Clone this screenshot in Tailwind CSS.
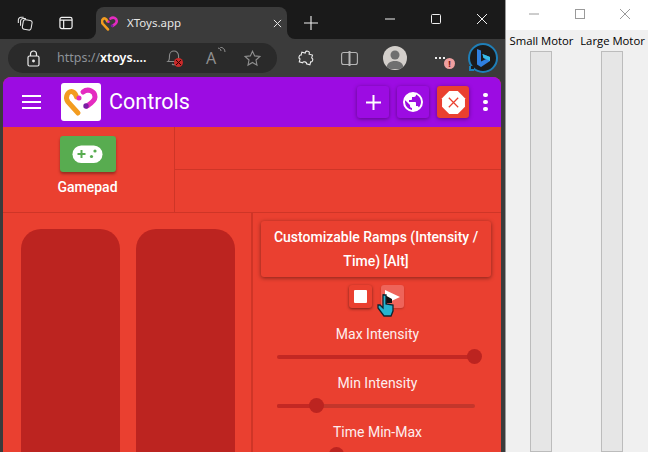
<!DOCTYPE html>
<html lang="en">
<head>
  <meta charset="UTF-8">
  <title>XToys.app</title>
  <script src="https://cdn.jsdelivr.net/npm/@tailwindcss/browser@4"></script>
</head>
<body class="bg-[#3b3b3b] overflow-hidden">
  <div class="relative flex w-[648px] h-[452px] overflow-hidden">

    <!-- browser window -->
    <div class="w-[505px] h-full flex flex-col shrink-0 bg-[#3b3b3b] font-['Noto_Sans',sans-serif]">
      <!-- tab strip -->
      <div class="h-[39px] shrink-0 flex flex-col">
        <div class="h-[7px] bg-[#1a1a1a]"></div>
        <div class="h-[32px] flex">
          <div class="w-[96px] bg-[#1a1a1a] rounded-br-[8px] flex items-center pl-[17px] gap-[26px]">
            <svg class="w-[16px] h-[16px]" viewBox="0 0 18 18" fill="none" stroke="#e8e8e8" stroke-width="1.2"><path d="M1.500 9V5.500a3 3 0 0 1 3-3h3"/><path d="M4 12V7a3 3 0 0 1 3-3h3"/><rect x="6.500" y="5.500" width="10" height="11" rx="2.500" transform="rotate(10 11 11)"/></svg>
            <svg class="w-[14px] h-[14px]" viewBox="0 0 15 15" fill="none" stroke="#f0f0f0" stroke-width="1.300"><rect x="1" y="1.500" width="13" height="12" rx="2"/><path d="M1 4.500h13M5 4.500v9"/></svg>
          </div>
          <div class="w-[191px] bg-[#1a1a1a]">
            <div class="h-full bg-[#3b3b3b] rounded-t-[8px] flex items-center pl-[5px] pr-[5px]">
              <svg class="w-[17px] h-[15px] shrink-0" viewBox="4 4 32 29" fill="none" stroke-linecap="round"><path d="M17 30 7 19C3 13 8 7 12 9c2 1 3 3 3.500 5" stroke="#f39c1f" stroke-width="5"/><path d="M22 9c5-4 12-1 12 5 0 4-5 7-8 9" stroke="#e42bc0" stroke-width="5"/><circle cx="18" cy="15" r="2.500" fill="#e42bc0"/><circle cx="25" cy="23" r="2.700" fill="#7b1fa2"/></svg>
              <span class="ml-[9px] text-[11.500px] text-[#e6e6e6] leading-none">XToys.app</span>
              <svg class="ml-auto w-[9px] h-[9px]" viewBox="0 0 10 10" stroke="#e8e8e8" stroke-width="1.100"><path d="M1 1l8 8M9 1l-8 8"/></svg>
            </div>
          </div>
          <div class="flex-1 bg-[#1a1a1a] rounded-bl-[8px] flex items-center pl-[17px]">
            <svg class="w-[14px] h-[14px]" viewBox="0 0 14 14" stroke="#f0f0f0" stroke-width="1.100"><path d="M7 0v14M0 7h14"/></svg>
            <div class="ml-auto flex items-center pb-[8px] pr-[18px] gap-[36px]">
              <svg class="w-[10px] h-[10px]" viewBox="0 0 10 10" stroke="#f0f0f0" stroke-width="1"><path d="M0 5h10"/></svg>
              <svg class="w-[10px] h-[10px]" viewBox="0 0 10 10" fill="none" stroke="#f0f0f0" stroke-width="1"><rect x=".5" y=".5" width="9" height="9" rx="1"/></svg>
              <svg class="w-[10px] h-[10px]" viewBox="0 0 10 10" stroke="#f0f0f0" stroke-width="1"><path d="M0 0l10 10M10 0 0 10"/></svg>
            </div>
          </div>
        </div>
      </div>

      <!-- toolbar -->
      <div class="h-[38px] shrink-0 flex items-center pl-[8px]">
        <div class="w-[269px] h-[30px] bg-[#2a2a2a] rounded-full flex items-center pl-[19px]">
          <svg class="w-[13px] h-[17px] shrink-0" viewBox="0 0 13 17" fill="none" stroke="#ededed" stroke-width="1.200"><rect x="1" y="6" width="11" height="10" rx="1.500"/><path d="M3.500 6V4a3 3 0 0 1 6 0v2"/><circle cx="6.500" cy="11" r=".8" fill="#ededed"/></svg>
          <span class="ml-[17px] text-[12.500px] leading-none text-[#8d9298] w-[92px] whitespace-nowrap">https://<span class="text-white font-semibold">xtoys....</span></span>
          <div class="relative ml-[17px] w-[16px] h-[18px]">
            <svg class="w-[16px] h-[17px]" viewBox="0 0 16 17" fill="none" stroke="#8c8c8c" stroke-width="1.100"><path d="M2 12.500c1.500-1 1.500-3 1.500-6a4.500 4.500 0 0 1 9 0c0 3 0 5 1.500 6zM6 15c1 1 3 1 4 0"/></svg>
            <div class="absolute left-[8px] top-[9px] w-[9px] h-[9px] rounded-full bg-[#c92a2a] flex items-center justify-center">
              <svg class="w-[5px] h-[5px]" viewBox="0 0 6 6" stroke="#300" stroke-width="1.200"><path d="M0 0l6 6M6 0 0 6"/></svg>
            </div>
          </div>
          <span class="ml-[24px] flex w-[20px] relative text-[16px] leading-none text-[#8f8f8f]">A
            <svg class="absolute left-[10px] -top-[3px] w-[10px] h-[10px]" viewBox="0 0 10 10" fill="none" stroke="#8f8f8f" stroke-width="1"><path d="M2 1c2 .5 3 1.500 3 3M4 0c3 .5 5 2 5 5"/></svg>
          </span>
          <svg class="ml-[18px] w-[17px] h-[17px]" viewBox="0 0 17 17" fill="none" stroke="#8f8f8f" stroke-width="1.100"><path d="M8.500 1.200l2.200 4.700 5.100.6-3.800 3.500 1 5.100-4.500-2.600L4 15.100l1-5.100L1.200 6.500l5.100-.6z"/></svg>
        </div>
        <svg class="ml-[21px] w-[16px] h-[16px]" viewBox="0 0 16 16" fill="none" stroke="#ededed" stroke-width="1.100"><path d="M6 2.500c0-2 4-2 4 0v1h3.500v3c2 0 2 4 0 4v3H10c0-2-4-2-4 0H2.500v-3c-2 0-2-4 0-4v-3H6z" transform="rotate(15 8 8)"/></svg>
        <svg class="ml-[27px] w-[17px] h-[15px]" viewBox="0 0 17 15" fill="none" stroke="#b5b5b5" stroke-width="1.100"><rect x=".6" y="1.500" width="15.800" height="12" rx="2"/><path d="M8.500 0v15" stroke-width="2"/></svg>
        <div class="ml-[25px] w-[24px] h-[24px] rounded-full bg-[#d3cfcb] overflow-hidden flex justify-center">
          <svg class="w-[24px] h-[24px]" viewBox="0 0 24 24" fill="#6f6f6f"><circle cx="12" cy="9" r="4.500"/><path d="M3 23c1-6 4-8 9-8s8 2 9 8z"/></svg>
        </div>
        <div class="relative ml-[28px] w-[20px] h-[20px]">
          <div class="flex gap-[2px] mt-[9px]">
            <span class="w-[2px] h-[2px] bg-[#eee]"></span><span class="w-[2px] h-[2px] bg-[#eee]"></span><span class="w-[2px] h-[2px] bg-[#eee]"></span>
          </div>
          <div class="absolute left-[9px] top-[10px] w-[11px] h-[11px] rounded-full bg-[#f0a0a0] text-[#7a1414] text-[9px] leading-[11px] text-center font-bold">!</div>
        </div>
        <div class="relative ml-[13px] w-[30px] h-[30px] rounded-full border-2 border-[#1f7fb8] bg-[#1b1b1b] flex items-center justify-center">
          <svg class="w-[16px] h-[20px]" viewBox="0 0 16 20"><path d="M2 1l4 1.500v11l5-2.500-2.500-1L7.500 6 15 9v4l-9 6-4-2.500z" fill="#2f7fe0"/><path d="M7.500 6 15 9v4L11 11l-2.500-1z" fill="#37bde8"/></svg>
          <div class="absolute -left-[1px] bottom-[0px] w-[5px] h-[5px] bg-[#1b1b1b] border-l-2 border-b-2 border-[#1f7fb8]"></div>
        </div>
      </div>

      <!-- app -->
      <div class="w-[498px] ml-[3px] flex-1 min-h-0 flex flex-col font-['Roboto',sans-serif] text-white bg-[#ea4030] rounded-t-[8px] overflow-hidden">
        <header class="h-[50px] shrink-0 bg-[#9c0ce2] flex items-center pl-[19px] pr-[13px]">
          <svg class="w-[19px] h-[14px]" viewBox="0 0 19 14" fill="#fff"><rect width="19" height="2"/><rect y="6" width="19" height="2"/><rect y="12" width="19" height="2"/></svg>
          <div class="ml-[20px] w-[40px] h-[38px] bg-white rounded-[3px]">
            <svg class="w-[40px] h-[38px]" viewBox="0 0 40 38" fill="none" stroke-linecap="round"><path d="M17 30 7 19C3 13 8 7 12 9c2 1 3 3 3.500 5" stroke="#f39c1f" stroke-width="5"/><path d="M22 9c5-4 12-1 12 5 0 4-5 7-8 9" stroke="#e42bc0" stroke-width="5"/><circle cx="18" cy="15" r="2.500" fill="#e42bc0"/><circle cx="25" cy="23" r="2.700" fill="#7b1fa2"/></svg>
          </div>
          <span class="ml-[8px] text-[21.500px] leading-none font-normal -mt-[1px]">Controls</span>
          <div class="ml-auto flex items-center">
            <div class="w-[32px] h-[32px] rounded-[3px] bg-[#9c0ce2] shadow-[0_1px_4px_rgba(0,0,0,.4)] flex items-center justify-center">
              <svg class="w-[15px] h-[15px]" viewBox="0 0 15 15" fill="#fff"><path d="M6.500 0h2v6.500H15v2H8.500V15h-2V8.500H0v-2h6.500z"/></svg>
            </div>
            <div class="ml-[8px] w-[32px] h-[32px] rounded-[3px] bg-[#9c0ce2] shadow-[0_1px_4px_rgba(0,0,0,.4)] flex items-center justify-center">
              <svg class="w-[24px] h-[24px]" viewBox="0 0 24 24" fill="#fff"><path d="M12 2a10 10 0 1 0 0 20 10 10 0 0 0 0-20zM4 12c0-.6.1-1.200.2-1.800L9 15v1c0 1.100.9 2 2 2v1.900A8 8 0 0 1 4 12zm13.900 5.400c-.3-.8-1-1.400-1.900-1.400h-1v-3c0-.6-.4-1-1-1H8v-2h2c.6 0 1-.4 1-1V7h2c1.100 0 2-.9 2-2v-.4a8 8 0 0 1 2.900 12.800z"/></svg>
            </div>
            <div class="ml-[8px] w-[32px] h-[32px] rounded-[3px] bg-[#ea4030] shadow-[0_1px_4px_rgba(0,0,0,.4)] flex items-center justify-center">
              <svg class="w-[25px] h-[25px]" viewBox="0 0 24 24"><path d="M7.900 1h8.200L23 7.900v8.200L16.100 23H7.900L1 16.100V7.900z" fill="#fff"/><path d="M7.500 7.500l9 9M16.500 7.500l-9 9" stroke="#ea4030" stroke-width="1.200"/></svg>
            </div>
            <div class="ml-[14px] w-[5px] flex flex-col gap-[3px]">
              <span class="w-[5px] h-[4px] rounded-full bg-white"></span><span class="w-[5px] h-[4px] rounded-full bg-white"></span><span class="w-[5px] h-[4px] rounded-full bg-white"></span>
            </div>
          </div>
        </header>

        <!-- top section -->
        <section class="h-[86px] shrink-0 flex border-b border-[#cf3527]">
          <div class="w-[172px] shrink-0 border-r border-[#cf3527] flex flex-col items-center pt-[9px]">
            <div class="w-[56px] h-[36px] -ml-[2px] rounded-[3px] bg-[#58ac50] shadow-[0_2px_3px_rgba(0,0,0,.35)] flex items-center justify-center">
              <svg class="w-[31px] h-[19px]" viewBox="0 0 31 19"><rect x=".5" y=".5" width="30" height="17.500" rx="8.700" fill="#fff"/><path d="M9.500 5v8M5.500 9h8" stroke="#58ac50" stroke-width="2"/><circle cx="23" cy="6" r="1.600" fill="#58ac50"/><circle cx="19.500" cy="11.500" r="1.600" fill="#58ac50"/></svg>
            </div>
            <span class="mt-[7px] -ml-[2px] text-[14px] leading-[16px] font-medium">Gamepad</span>
          </div>
          <div class="flex-1 flex flex-col">
            <div class="h-[43px] border-b border-[#cf3527]"></div>
          </div>
        </section>

        <!-- bottom section -->
        <section class="flex-1 min-h-0 flex">
          <div class="w-[250px] shrink-0 border-r-2 border-[#cf3527] flex gap-[16px] pt-[16px] pl-[18px]">
            <div class="w-[99px] h-[300px] rounded-t-[20px] bg-[#bc2420]"></div>
            <div class="w-[99px] h-[300px] rounded-t-[20px] bg-[#bc2420]"></div>
          </div>
          <div class="flex-1 min-w-0 pr-[2px] flex flex-col items-center pt-[8px]">
            <div class="w-[230px] h-[56px] rounded-[3px] bg-[#ea4030] shadow-[0_1px_4px_rgba(0,0,0,.45)] flex items-center justify-center text-center text-[14px] leading-[24px] font-medium">
              Customizable Ramps (Intensity / Time) [Alt]
            </div>
            <div class="mt-[8px] flex gap-[9px]">
              <div class="w-[23px] h-[23px] rounded-[3px] bg-[#ea4030] shadow-[0_1px_3px_rgba(0,0,0,.5)] flex items-center justify-center">
                <span class="w-[13px] h-[13px] rounded-[1px] bg-white"></span>
              </div>
              <div class="w-[23px] h-[23px] rounded-[3px] bg-[#ee645a] shadow-[0_1px_2px_rgba(0,0,0,.2)] flex items-center justify-center">
                <svg class="w-[16px] h-[14px]" viewBox="0 0 16 14" fill="#fff"><path d="M1 0l15 7-15 7z"/></svg>
              </div>
            </div>
            <span class="mt-[16px] ml-[3px] text-[14px] leading-[20px] text-[#fdeeee]">Max Intensity</span>
            <div class="relative mt-[11px] w-[198px] h-[4px] rounded-full bg-[#c42823]">
              <span class="absolute -right-[7px] -top-[6px] w-[15px] h-[15px] rounded-full bg-[#bc2420]"></span>
            </div>
            <span class="mt-[14px] ml-[3px] text-[14px] leading-[20px] text-[#fdeeee]">Min Intensity</span>
            <div class="relative mt-[11px] w-[198px] h-[4px] rounded-full bg-[#c4362b]">
              <span class="absolute left-0 top-0 w-[40px] h-[4px] rounded-full bg-[#c42823]"></span>
              <span class="absolute left-[32px] -top-[6px] w-[15px] h-[15px] rounded-full bg-[#bc2420]"></span>
            </div>
            <span class="mt-[14px] ml-[3px] text-[14px] leading-[20px] text-[#fdeeee]">Time Min-Max</span>
            <div class="relative mt-[5px] w-[198px] h-[4px]">
              <span class="absolute left-[52px] top-0 w-[15px] h-[15px] rounded-full bg-[#bc2420]"></span>
            </div>
          </div>
        </section>
      </div>
    </div>

    <!-- motor window -->
    <div class="w-[143px] h-full shrink-0 bg-[#f0f0f0] border-l border-[#9a9a9a] flex flex-col font-['Open_Sans',sans-serif]">
      <div class="h-[30px] shrink-0 bg-white flex items-center pl-[23px] gap-[35.500px] pb-[2px]">
        <svg class="w-[10px] h-[10px]" viewBox="0 0 10 10" stroke="#9a9a9a" stroke-width="1"><path d="M0 5h10"/></svg>
        <svg class="w-[10px] h-[10px]" viewBox="0 0 10 10" fill="none" stroke="#9a9a9a" stroke-width="1"><rect x=".5" y=".5" width="9" height="9"/></svg>
        <svg class="w-[10px] h-[10px]" viewBox="0 0 10 10" stroke="#9a9a9a" stroke-width="1"><path d="M0 0l10 10M10 0 0 10"/></svg>
      </div>
      <div class="flex-1 min-h-0 flex pl-[2px] gap-[6px] pt-[3px]">
        <div class="w-[65px] flex flex-col items-center">
          <span class="ml-[2px] text-[11.300px] leading-[16px] text-black whitespace-nowrap">Small Motor</span>
          <div class="mt-[2px] w-[22px] flex-1 bg-[#e6e6e6] border border-[#bcbcbc]"></div>
        </div>
        <div class="w-[65px] flex flex-col items-center">
          <span class="ml-[2px] text-[11.300px] leading-[16px] text-black whitespace-nowrap">Large Motor</span>
          <div class="mt-[2px] w-[22px] flex-1 bg-[#e6e6e6] border border-[#bcbcbc]"></div>
        </div>
      </div>
    </div>

    <!-- mouse cursor over the play button -->
    <svg class="absolute left-[377px] top-[291px] w-[18px] h-[27px]" viewBox="0 0 18 27"><path d="M6 3l9 5v4h-5v4H6z" fill="#111"/><path d="M6 4h3v9l7 1v6l-2 5H7L1 17v-3h2l3 3z" fill="#27b3cf" stroke="#0d2430" stroke-width="1.300"/></svg>
  </div>
</body>
</html>
